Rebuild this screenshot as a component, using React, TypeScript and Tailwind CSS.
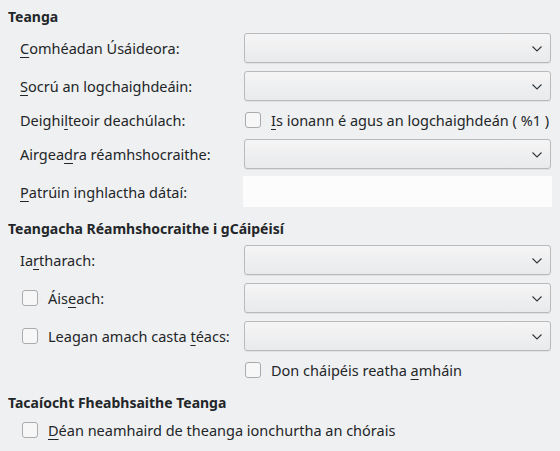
import React from "react";

const U = ({ c }: { c: string }) => (
  <span className="underline decoration-1 underline-offset-[3px]">{c}</span>
);

const Chevron = () => (
  <svg width="10" height="6" viewBox="0 0 10 6" className="absolute right-[8px] top-[12px]">
    <path d="M0.5 0.5 L5 5 L9.5 0.5" fill="none" stroke="#31363b" strokeWidth="1.1" />
  </svg>
);

const Combo = () => (
  <div className="relative h-[30px] w-[307px] rounded-[3px] border border-[#b9babb] bg-gradient-to-b from-[#f5f5f6] to-[#e9eaeb] shadow-[0_1px_0_rgba(0,0,0,0.06)]">
    <Chevron />
  </div>
);

const Box = () => (
  <div className="h-[16px] w-[16px] shrink-0 rounded-[3px] border border-[#a9abad] bg-[#f7f7f7]" />
);

const Title = ({ children, className = "" }: { children: React.ReactNode; className?: string }) => (
  <div className={"h-[20px] pl-[8px] text-[14px] font-bold leading-[20px] " + className}>{children}</div>
);

const Row = ({ label, children, className = "" }: { label: React.ReactNode; children: React.ReactNode; className?: string }) => (
  <div className={"flex items-center " + className}>
    <div className="w-[244px] shrink-0">{label}</div>
    {children}
  </div>
);

export default function App() {
  return (
    <div
      className="h-[451px] w-[560px] overflow-hidden bg-[#eff0f1] text-[14.5px] leading-[20px] text-[#232629]"
      style={{ fontFamily: '"Noto Sans", sans-serif' }}
    >
      <div className="pt-[7px]">
        <Title>Teanga</Title>
        <Row className="mt-[6px]" label={<span className="pl-[20px]"><U c="C" />omhéadan Úsáideora:</span>}>
          <Combo />
        </Row>
        <Row className="mt-[8px]" label={<span className="pl-[20px]"><U c="S" />ocrú an logchaighdeáin:</span>}>
          <Combo />
        </Row>
        <Row className="mt-[7px] h-[24px]" label={<span className="pl-[20px]">Deighi<U c="l" />teoir deachúlach:</span>}>
          <div className="flex items-center pl-[1px]">
            <Box />
            <span className="ml-[10px]"><U c="I" />s ionann é agus an logchaighdeán ( %1 )</span>
          </div>
        </Row>
        <Row className="mt-[7px]" label={<span className="pl-[20px]">Airgea<U c="d" />ra réamhshocraithe:</span>}>
          <Combo />
        </Row>
        <Row className="mt-[7px]" label={<span className="pl-[20px]"><U c="P" />atrúin inghlactha dátaí:</span>}>
          <div className="-ml-[1px] h-[31px] w-[309px] bg-[#fcfcfc]" />
        </Row>
        <Title className="mt-[12px]">Teangacha Réamhshocraithe i gCáipéisí</Title>
        <Row className="mt-[6px]" label={<span className="pl-[20px]">Ia<U c="r" />tharach:</span>}>
          <Combo />
        </Row>
        <Row
          className="mt-[8px]"
          label={
            <div className="flex items-center pl-[22px]">
              <Box />
              <span className="ml-[10px]">Áis<U c="e" />ach:</span>
            </div>
          }
        >
          <Combo />
        </Row>
        <Row
          className="mt-[8px]"
          label={
            <div className="flex items-center pl-[22px]">
              <Box />
              <span className="ml-[10px]">Leagan amach casta <U c="t" />éacs:</span>
            </div>
          }
        >
          <Combo />
        </Row>
        <Row className="mt-[7px] h-[24px]" label={<span />}>
          <div className="flex items-center pl-[1px]">
            <Box />
            <span className="ml-[10px]">Don cháipéis reatha <U c="a" />mháin</span>
          </div>
        </Row>
        <Title className="mt-[11px]">Tacaíocht Fheabhsaithe Teanga</Title>
        <div className="mt-[5px] flex h-[24px] items-center pl-[22px]">
          <Box />
          <span className="ml-[10px]"><U c="D" />éan neamhaird de theanga ionchurtha an chórais</span>
        </div>
      </div>
    </div>
  );
}
